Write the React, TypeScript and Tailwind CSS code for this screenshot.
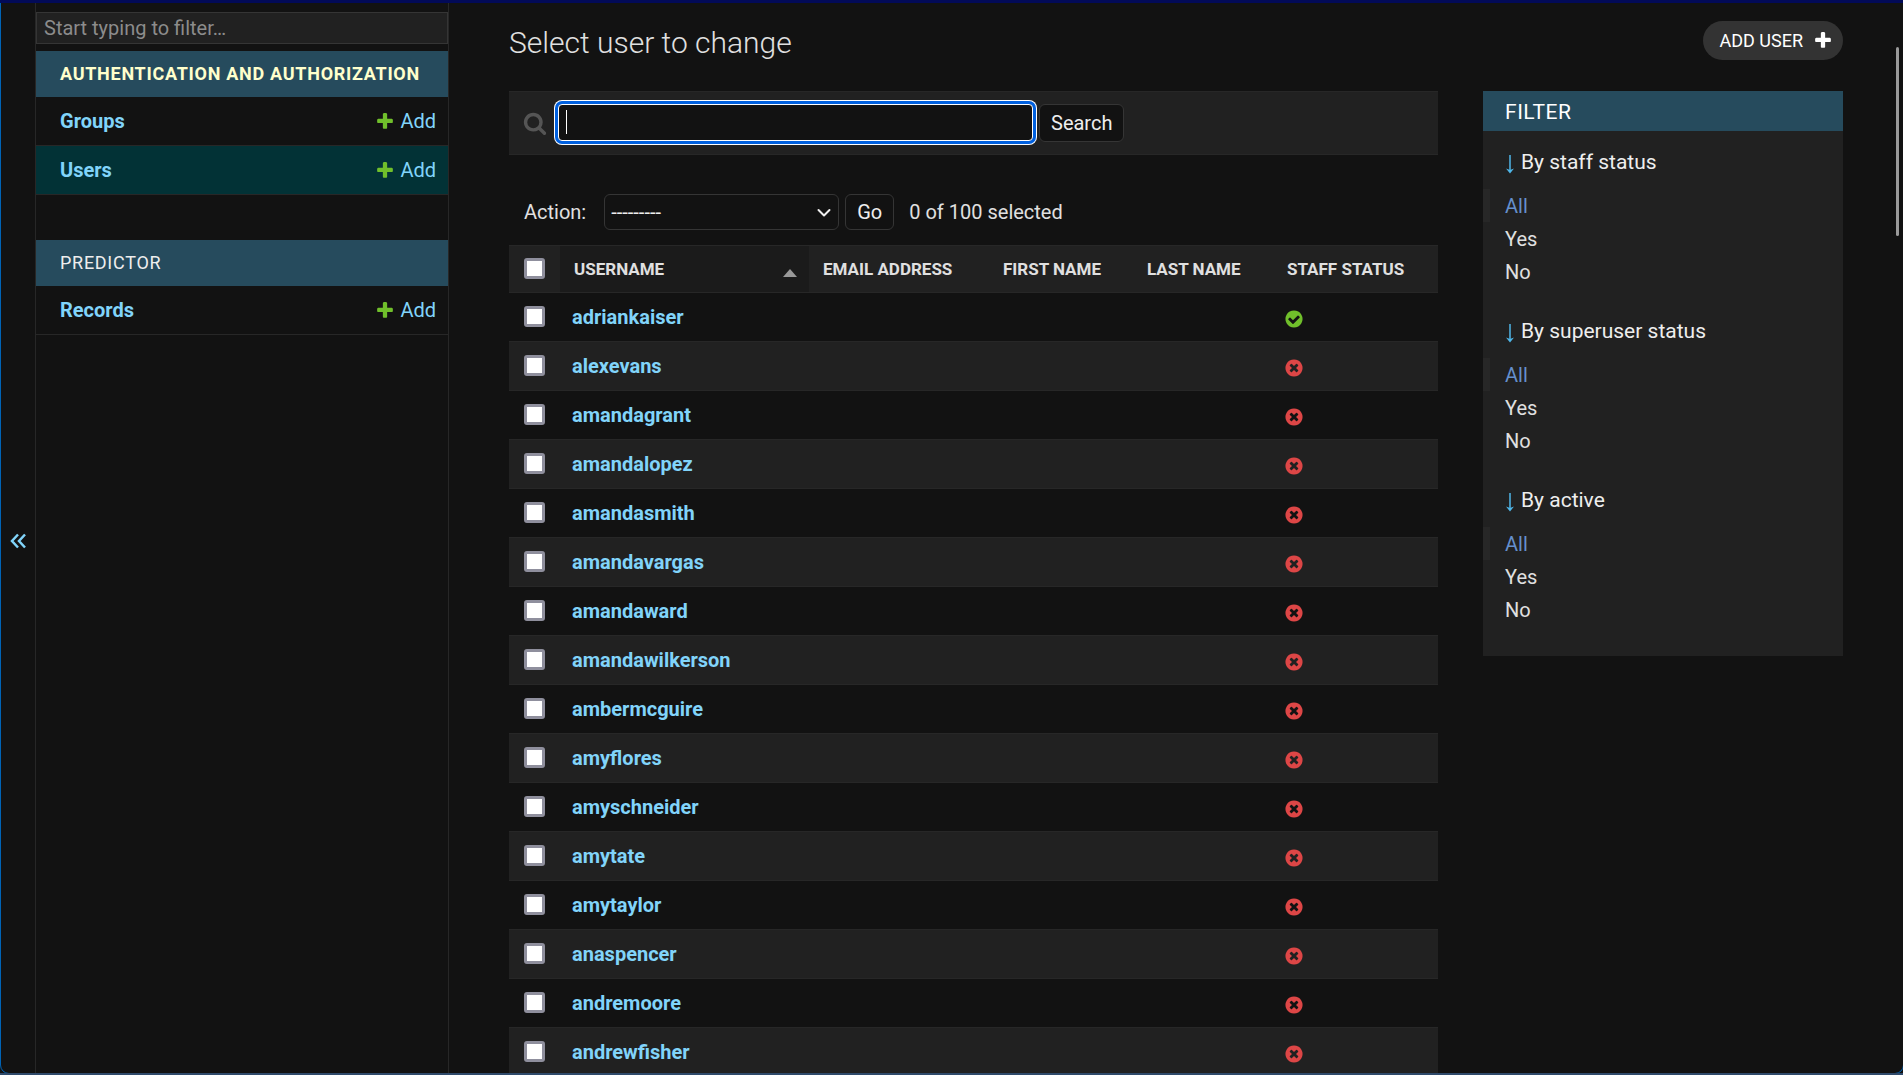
import React from 'react';
import { clsx } from 'clsx';

const apps = [
  {
    name: 'Authentication and Authorization',
    active: true,
    models: [
      { name: 'Groups', active: false },
      { name: 'Users', active: true },
    ],
  },
  {
    name: 'Predictor',
    active: false,
    models: [{ name: 'Records', active: false }],
  },
];

const users = [
  { username: 'adriankaiser', staff: true },
  { username: 'alexevans', staff: false },
  { username: 'amandagrant', staff: false },
  { username: 'amandalopez', staff: false },
  { username: 'amandasmith', staff: false },
  { username: 'amandavargas', staff: false },
  { username: 'amandaward', staff: false },
  { username: 'amandawilkerson', staff: false },
  { username: 'ambermcguire', staff: false },
  { username: 'amyflores', staff: false },
  { username: 'amyschneider', staff: false },
  { username: 'amytate', staff: false },
  { username: 'amytaylor', staff: false },
  { username: 'anaspencer', staff: false },
  { username: 'andremoore', staff: false },
  { username: 'andrewfisher', staff: false },
];

const filters = ['By staff status', 'By superuser status', 'By active'];

const PlusIcon = ({ className }: { className?: string }) => (
  <svg viewBox="0 0 1792 1792" className={className} fill="currentColor" aria-hidden="true">
    <path d="M1600 796v192q0 40-28 68t-68 28h-416v416q0 40-28 68t-68 28h-192q-40 0-68-28t-28-68v-416h-416q-40 0-68-28t-28-68v-192q0-40 28-68t68-28h416v-416q0-40 28-68t68-28h192q40 0 68 28t28 68v416h416q40 0 68 28t28 68z" />
  </svg>
);

const SearchIcon = () => (
  <svg viewBox="0 0 1792 1792" className="size-6 shrink-0 text-[#555555]" fill="currentColor" aria-hidden="true">
    <path d="M1216 832q0-185-131.500-316.500t-316.500-131.500-316.500 131.500-131.500 316.500 131.500 316.500 316.500 131.500 316.500-131.500 131.500-316.500zm512 832q0 52-38 90t-90 38q-54 0-90-38l-343-342q-179 124-399 124-143 0-273.500-55.500t-225-150-150-225-55.500-273.500 55.500-273.500 150-225 225-150 273.500-55.500 273.500 55.500 225 150 150 225 55.500 273.500q0 220-124 399l343 343q37 37 37 90z" />
  </svg>
);

const StatusIcon = ({ ok }: { ok: boolean }) => (
  <svg
    viewBox="0 0 1792 1792"
    className={clsx('mt-1 size-5', ok ? 'text-[#70bf2b]' : 'text-[#dd4646]')}
    fill="currentColor"
    role="img"
    aria-label={ok ? 'True' : 'False'}
  >
    {ok ? (
      <path d="M1412 734q0-28-18-46l-91-90q-19-19-45-19t-45 19l-408 407-226-226q-19-19-45-19t-45 19l-91 90q-18 18-18 46 0 27 18 45l362 362q19 19 45 19 27 0 46-19l543-543q18-18 18-45zm252 162q0 209-103 385.500t-279.500 279.500-385.500 103-385.500-103-279.500-279.500-103-385.500 103-385.500 279.500-279.500 385.500-103 385.500 103 279.500 279.500 103 385.500z" />
    ) : (
      <path d="M1277 1122q0-26-19-45l-181-181 181-181q19-19 19-45 0-27-19-46l-90-90q-19-19-46-19-26 0-45 19l-181 181-181-181q-19-19-45-19-27 0-46 19l-90 90q-19 19-19 46 0 26 19 45l181 181-181 181q-19 19-19 45 0 27 19 46l90 90q19 19 46 19 26 0 45-19l181-181 181 181q19 19 45 19 27 0 46-19l90-90q19-19 19-46zm387-226q0 209-103 385.500t-279.500 279.500-385.500 103-385.500-103-279.500-279.500-103-385.500 103-385.500 279.500-279.500 385.500-103 385.500 103 279.500 279.500 103 385.500z" />
    )}
  </svg>
);

const Checkbox = ({ label }: { label: string }) => (
  <input
    type="checkbox"
    aria-label={label}
    className="mb-px block size-[21px] appearance-none rounded-[3px] border-3 border-[#8f8f9d] bg-white checked:bg-[#0060df]"
  />
);

const Sidebar = () => (
  <nav aria-label="Sidebar" className="w-[413px] shrink-0 border-r border-[#272727]">
    <input
      type="search"
      placeholder="Start typing to filter…"
      aria-label="Filter navigation items"
      className="mt-[9px] block h-8 w-full border border-[#353535] bg-[#212121] px-[7px] text-[20px] outline-none placeholder:text-[#8c8c8c]"
    />
    <div className="mt-[7px] flex flex-col gap-[45px]">
      {apps.map((app) => (
        <section key={app.name}>
          <h2 className="flex h-[46px] items-center bg-[#264b5d] pb-px pl-6 text-[18px] tracking-[0.04em] whitespace-nowrap uppercase">
            <a href="#" className={app.active ? 'font-bold text-[#ffffcc]' : 'text-[#eeeeee]'}>
              {app.name}
            </a>
          </h2>
          {app.models.map((model) => (
            <div
              key={model.name}
              className={clsx(
                'flex h-[49px] items-center justify-between border-b border-[#272727] pr-3 pl-6 text-[20px] text-[#81d4fa]',
                model.active && 'bg-[#023236]'
              )}
            >
              <a href="#" className="font-bold">{model.name}</a>
              <a href="#" className="flex items-center gap-[5px]">
                <PlusIcon className="size-5 text-[#70bf2b]" />
                Add
              </a>
            </div>
          ))}
        </section>
      ))}
    </div>
  </nav>
);

const Toolbar = () => (
  <form className="flex h-16 items-center border-y border-[#272727] bg-[#212121] pb-px pl-[14px]">
    <label htmlFor="searchbar">
      <SearchIcon />
    </label>
    <div className="relative ml-[11px] w-[475px]">
      <input
        id="searchbar"
        type="text"
        aria-label="Search users"
        className="block h-[37px] w-full rounded-[4px] border border-white bg-[#121212] px-2 text-[20px] caret-transparent shadow-[0_0_0_3px_#0060df,0_0_0_4px_#ffffff] outline-none"
      />
      <span className="absolute top-[6px] left-2 h-6 w-px bg-white" />
    </div>
    <button type="submit" className="ml-[6px] h-[38px] rounded-[6px] border border-[#353535] bg-[#121212] px-[11px] text-[20px] text-[#eeeeee]">
      Search
    </button>
  </form>
);

const Actions = () => (
  <div className="flex h-[90px] items-center px-[15px] pt-6 text-[20px]">
    <label htmlFor="action">Action:</label>
    <div className="relative ml-[18px]">
      <select id="action" className="block h-9 w-[235px] appearance-none rounded-[6px] border border-[#353535] bg-[#121212] px-[6px] text-[20px] text-[#eeeeee]">
        <option>---------</option>
        <option>Delete selected users</option>
      </select>
      <svg viewBox="0 0 14 10" className="pointer-events-none absolute top-[14px] right-2 h-[10px] w-[14px]" fill="none" stroke="#eeeeee" strokeWidth="2" strokeLinecap="round" strokeLinejoin="round">
        <path d="M1.500 2l5.500 5.500 5.500-5.500" />
      </svg>
    </div>
    <button type="button" className="ml-[6px] h-9 rounded-[6px] border border-[#353535] px-[11px] text-[#eeeeee]">
      Go
    </button>
    <span className="ml-[15px]">0 of 100 selected</span>
  </div>
);

const UserTable = () => (
  <table className="w-full table-fixed text-left">
    <thead>
      <tr className="h-[47px] border-t border-[#272727] bg-[#212121] text-[17px] uppercase">
        <th className="w-[51px] pl-[15px]"><Checkbox label="Select all users" /></th>
        <th className="w-[249px] bg-[#1b1b1b] pt-px pr-3 pl-[14px]">
          <a href="#" className="flex items-center justify-between">
            Username
            <svg viewBox="0 0 14 8" className="mt-[6px] h-2 w-[14px]" fill="#999999" aria-hidden="true">
              <path d="M7 0l7 8H0z" />
            </svg>
          </a>
        </th>
        <th className="w-[180px] pt-px pl-[14px]"><a href="#">Email address</a></th>
        <th className="w-[144px] pt-px pl-[14px]"><a href="#">First name</a></th>
        <th className="w-[140px] pt-px pl-[14px]"><a href="#">Last name</a></th>
        <th className="pt-px pl-[14px]"><a href="#">Staff status</a></th>
      </tr>
    </thead>
    <tbody>
      {users.map((user) => (
        <tr key={user.username} className="h-[49px] border-t border-[#272727] even:bg-[#212121]">
          <td className="pl-[15px]"><Checkbox label={`Select ${user.username}`} /></td>
          <th className="pl-3 text-[20px]">
            <a href="#" className="text-[#81d4fa]">{user.username}</a>
          </th>
          <td />
          <td />
          <td />
          <td className="pl-[11px]"><StatusIcon ok={user.staff} /></td>
        </tr>
      ))}
    </tbody>
  </table>
);

const FilterPanel = () => (
  <aside className="w-[360px] shrink-0 self-start bg-[#212121] pb-[18px]">
    <h2 className="flex h-10 items-center bg-[#264b5d] px-[22px] pt-[3px] text-[21px] tracking-wide text-white uppercase">Filter</h2>
    {filters.map((title) => (
      <details key={title} open className="pb-3">
        <summary className="flex h-[58px] list-none items-center gap-[6px] px-[22px] pt-[6px] text-[21px] text-[#eeeeee]">
          <svg viewBox="0 0 10 20" className="mt-[2px] h-5 w-[10px]" fill="none" stroke="#4fb6e8" aria-hidden="true">
            <path d="M5 1v16" strokeWidth="1.500" />
            <path d="M1 14.500l4 1.500 4-1.500-4 5z" fill="#4fb6e8" stroke="none" />
          </svg>
          {title}
        </summary>
        <ul className="text-[20px]">
          <li className="h-[33px] border-l-7 border-[#272727] pt-[2px] pl-[15px]"><a href="#" className="text-[#6590cc]">All</a></li>
          <li className="h-[33px] pt-[2px] pl-[22px]"><a href="#">Yes</a></li>
          <li className="h-[33px] pt-[2px] pl-[22px]"><a href="#">No</a></li>
        </ul>
      </details>
    ))}
  </aside>
);

export default function App() {
  return (
    <div className="relative flex h-screen overflow-hidden border-t-3 border-[#020a58] bg-[#121212] pl-px font-['Roboto',sans-serif] text-[#e0e0e0]">
      <button type="button" aria-label="Toggle navigation" className="flex w-[35px] shrink-0 items-center justify-center border-r border-[#272727] pt-1 text-[#81d4fa]">
        <svg viewBox="0 0 16 16" className="size-4" fill="none" stroke="currentColor" strokeWidth="2.500" aria-hidden="true">
          <path d="M8 1.500L2 8l6 6.500M15 1.500L9 8l6 6.500" />
        </svg>
      </button>
      <Sidebar />

      <main className="min-w-0 flex-1 px-[60px]">
        <div className="flex h-[88px] items-start justify-between pt-[18px]">
          <h1 className="text-[30px] leading-[44px] font-light">Select user to change</h1>
          <a href="#" className="flex h-[39px] items-center gap-[10px] rounded-full bg-[#333333] pr-[10px] pb-px pl-4 text-[18px] text-white uppercase">
            Add user
            <PlusIcon className="size-5" />
          </a>
        </div>
        <div className="flex gap-[45px]">
          <div className="min-w-0 flex-1">
            <Toolbar />
            <Actions />
            <UserTable />
          </div>
          <FilterPanel />
        </div>
      </main>

      {/* Scroll thumb and window frame */}
      <div className="absolute top-11 right-1 h-[189px] w-[3px] rounded-full bg-[#9a9a9a]" />
      <div className="pointer-events-none absolute -top-3 -right-px bottom-px left-0 rounded-b-[9px] border border-[#0063b5]" />
      <div className="pointer-events-none absolute inset-x-0 bottom-0 h-[2px] bg-[#2f4a6b]" />
    </div>
  );
}
